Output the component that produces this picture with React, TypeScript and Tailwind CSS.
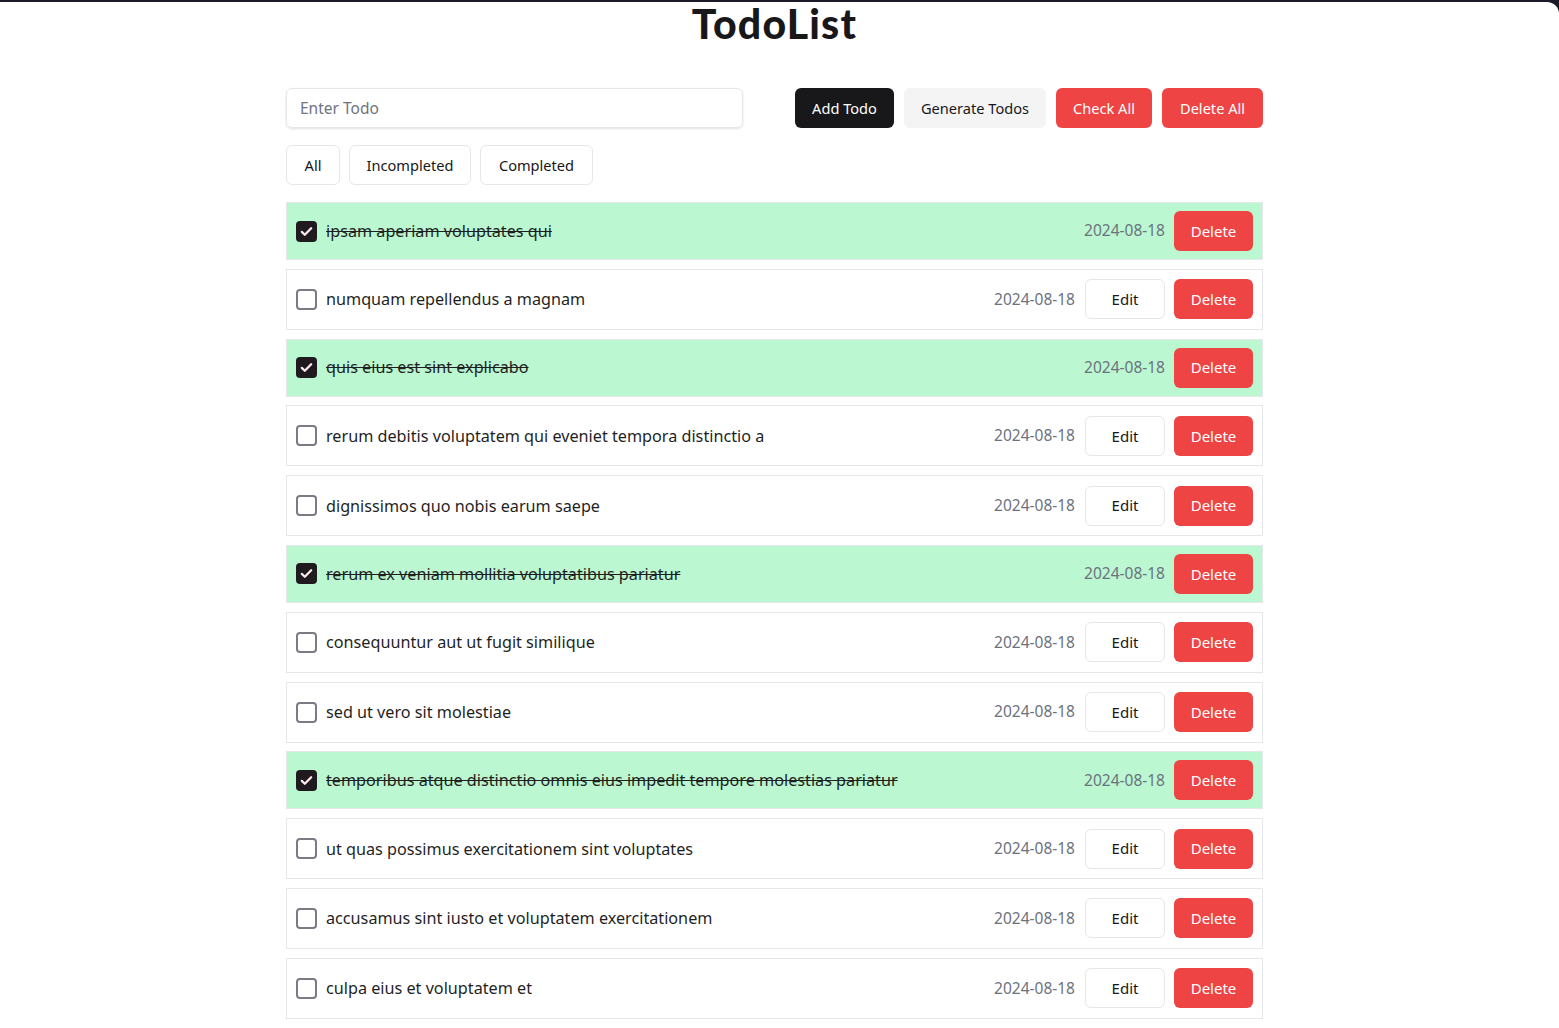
import { useState } from "react";

type Todo = {
    id: number;
    title: string;
    completed: boolean;
    date: string;
};

const initialTodos: Todo[] = [
    { id: 1, title: "ipsam aperiam voluptates qui", completed: true, date: "2024-08-18" },
    { id: 2, title: "numquam repellendus a magnam", completed: false, date: "2024-08-18" },
    { id: 3, title: "quis eius est sint explicabo", completed: true, date: "2024-08-18" },
    { id: 4, title: "rerum debitis voluptatem qui eveniet tempora distinctio a", completed: false, date: "2024-08-18" },
    { id: 5, title: "dignissimos quo nobis earum saepe", completed: false, date: "2024-08-18" },
    { id: 6, title: "rerum ex veniam mollitia voluptatibus pariatur", completed: true, date: "2024-08-18" },
    { id: 7, title: "consequuntur aut ut fugit similique", completed: false, date: "2024-08-18" },
    { id: 8, title: "sed ut vero sit molestiae", completed: false, date: "2024-08-18" },
    { id: 9, title: "temporibus atque distinctio omnis eius impedit tempore molestias pariatur", completed: true, date: "2024-08-18" },
    { id: 10, title: "ut quas possimus exercitationem sint voluptates", completed: false, date: "2024-08-18" },
    { id: 11, title: "accusamus sint iusto et voluptatem exercitationem", completed: false, date: "2024-08-18" },
    { id: 12, title: "culpa eius et voluptatem et", completed: false, date: "2024-08-18" },
    { id: 13, title: "voluptas quo tenetur perspiciatis explicabo natus", completed: true, date: "2024-08-18" },
    { id: 14, title: "aliquid amet impedit consequatur aspernatur", completed: false, date: "2024-08-18" },
];

const generated = [
    "laboriosam mollitia et enim quasi adipisci quia provident illum",
    "qui ullam ratione quibusdam voluptatem quia omnis",
    "illo expedita consequatur quia in",
    "quo adipisci enim quam ut ab",
];

const btn = "h-10 whitespace-nowrap rounded-md px-0 text-[14.6px] leading-none";

const Checkbox = ({ checked, onChange }: { checked: boolean; onChange: () => void }) => (
    <button
        type="button"
        onClick={onChange}
        className={
            checked
                ? "flex h-[21px] w-[21px] shrink-0 items-center justify-center rounded-[4px] bg-[#1f1a1d]"
                : "h-[21px] w-[21px] shrink-0 rounded-[4px] border-2 border-[#7b7a85] bg-white"
        }
    >
        {checked && (
            <svg viewBox="0 0 16 16" className="h-[15px] w-[15px]" fill="none">
                <path d="M3 8.4l3.2 3.1L13 4.6" stroke="#ffe9ee" strokeWidth="2.4" strokeLinecap="round" strokeLinejoin="round" />
            </svg>
        )}
    </button>
);

const App = () => {
    const [todos, setTodos] = useState<Todo[]>(initialTodos);
    const [text, setText] = useState("");
    const [filter, setFilter] = useState<"all" | "incompleted" | "completed">("all");

    const addTodo = () => {
        if (!text.trim()) return;
        setTodos([{ id: Date.now(), title: text, completed: false, date: "2024-08-18" }, ...todos]);
        setText("");
    };

    const generateTodos = () => {
        const list = generated.map((title, i) => ({ id: Date.now() + i, title, completed: false, date: "2024-08-18" }));
        setTodos([...todos, ...list]);
    };

    const toggle = (id: number) => {
        setTodos(todos.map((t) => (t.id === id ? { ...t, completed: !t.completed } : t)));
    };

    const shown = todos.filter((t) => (filter === "all" ? true : filter === "completed" ? t.completed : !t.completed));

    return (
        <div className="min-h-screen bg-[#1b1a27] pt-[2px]" style={{ fontFamily: '"Noto Sans", sans-serif' }}>
            <div className="min-h-[1026px] rounded-tr-[12px] bg-white pr-[10px]">
                <div className="mx-auto w-[977px]">
                    <h1
                        className="text-center text-[41px] font-black leading-[44px] tracking-[1.2px] text-[#18181b]"
                        style={{ fontFamily: 'Lato, sans-serif' }}
                    >
                        TodoList
                    </h1>

                    <div className="mt-[42px] flex items-center justify-between">
                        <input
                            value={text}
                            onChange={(e) => setText(e.target.value)}
                            placeholder="Enter Todo"
                            className="h-10 w-[457px] rounded-md border border-gray-200 px-[13px] text-[15.5px] text-[#1f1f1f] shadow-sm outline-none placeholder:text-[#6f7380]"
                        />
                        <div className="flex gap-[10px]">
                            <button type="button" onClick={addTodo} className={`${btn} w-[99px] bg-[#18181b] text-white`}>
                                Add Todo
                            </button>
                            <button type="button" onClick={generateTodos} className={`${btn} w-[142px] bg-[#f4f4f5] text-[#18181b]`}>
                                Generate Todos
                            </button>
                            <button
                                type="button"
                                onClick={() => setTodos(todos.map((t) => ({ ...t, completed: true })))}
                                className={`${btn} w-[96px] bg-[#ef4444] text-white`}
                            >
                                Check All
                            </button>
                            <button type="button" onClick={() => setTodos([])} className={`${btn} w-[101px] bg-[#ef4444] text-white`}>
                                Delete All
                            </button>
                        </div>
                    </div>

                    <div className="mt-[17px] flex gap-[9px]">
                        <button type="button" onClick={() => setFilter("all")} className={`${btn} w-[54px] border border-gray-200 bg-white text-[#18181b]`}>
                            All
                        </button>
                        <button type="button" onClick={() => setFilter("incompleted")} className={`${btn} w-[122px] border border-gray-200 bg-white text-[#18181b]`}>
                            Incompleted
                        </button>
                        <button type="button" onClick={() => setFilter("completed")} className={`${btn} w-[113px] border border-gray-200 bg-white text-[#18181b]`}>
                            Completed
                        </button>
                    </div>

                    <ul className="mt-[17px] flex flex-col gap-[8.8px]">
                        {shown.map((todo) => (
                            <li
                                key={todo.id}
                                className={
                                    todo.completed
                                        ? "flex h-[58px] items-center gap-[10px] border border-gray-200 bg-[#bbf7d0] pl-[9px] pr-[9px]"
                                        : "flex h-[61px] items-center gap-[10px] border border-gray-200 bg-white pl-[9px] pr-[9px]"
                                }
                            >
                                <Checkbox checked={todo.completed} onChange={() => toggle(todo.id)} />
                                <span
                                    className={
                                        todo.completed
                                            ? "ml-[-1px] flex-1 text-[16.2px] text-[#1f1f1f] line-through"
                                            : "ml-[-1px] flex-1 text-[16.2px] text-[#1f1f1f]"
                                    }
                                >
                                    {todo.title}
                                </span>
                                <span className="text-[15.5px] text-[#6b7280]">{todo.date}</span>
                                {!todo.completed && (
                                    <button type="button" className="h-10 w-20 rounded-md border border-gray-200 bg-white text-[15px] text-[#18181b]">
                                        Edit
                                    </button>
                                )}
                                <button
                                    type="button"
                                    onClick={() => setTodos(todos.filter((t) => t.id !== todo.id))}
                                    className="ml-[-1px] h-10 w-[79px] rounded-md bg-[#ef4444] text-[15px] text-white"
                                >
                                    Delete
                                </button>
                            </li>
                        ))}
                    </ul>
                </div>
            </div>
        </div>
    );
};

export default App;
